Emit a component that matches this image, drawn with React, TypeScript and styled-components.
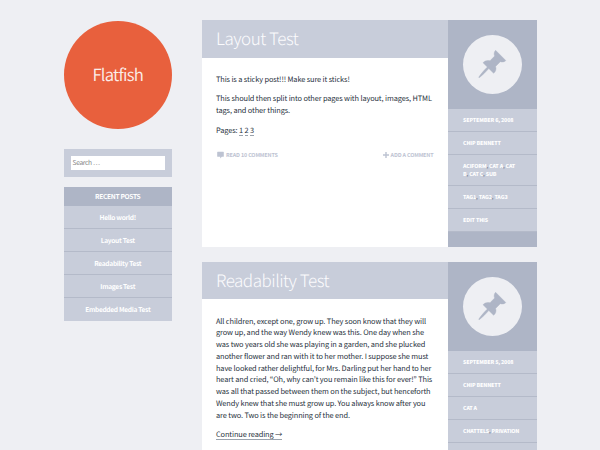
import React from "react";
import styled, { createGlobalStyle } from "styled-components";

const Global = createGlobalStyle`
  * { box-sizing: border-box; }
  body { margin: 0; background: #eeeff3; overflow: hidden; }
  #root {
    font-family: "Noto Sans CJK KR", "Noto Sans", sans-serif;
    color: #1f313c;
    text-rendering: geometricPrecision;
  }
`;

const Page = styled.div`
  display: flex;
  align-items: flex-start;
  gap: 29.5px;
  height: 450px;
  padding: 20px 0 0 63.5px;
  overflow: hidden;
`;

const Sidebar = styled.aside`
  width: 108.5px;
  flex: none;
`;

const Logo = styled.h1`
  width: 108.5px;
  height: 108.5px;
  margin: 0.5px 0 20px;
  padding-bottom: 2px;
  border-radius: 50%;
  background: #e8603d;
  color: #fbeeea;
  display: flex;
  align-items: center;
  justify-content: center;
  font-size: 16.8px;
  font-weight: 350;
  letter-spacing: -0.8px;
`;

const Search = styled.div`
  height: 28px;
  padding: 7px;
  background: #c8cdda;
`;

const Field = styled.div`
  height: 14px;
  padding-left: 2px;
  background: #fff;
  color: #858585;
  font-size: 6.6px;
  letter-spacing: -0.3px;
  line-height: 13px;
`;

const Recent = styled.nav`
  margin-top: 10px;
  background: #c8cdda;
  color: #fff;
  text-align: center;
  font-size: 6.6px;
  font-weight: 700;
  letter-spacing: -0.3px;
`;

const RecentHead = styled.div`
  height: 19px;
  line-height: 19px;
  background: #aeb5c6;
`;

const RecentItem = styled.div`
  height: 23px;
  line-height: 23px;
  border-bottom: 1px solid #b4bac9;
  &:last-child { border: 0; }
`;

const Main = styled.main`
  width: 335.5px;
  flex: none;
  display: flex;
  flex-direction: column;
  gap: 15px;
`;

const Post = styled.article`
  display: flex;
  flex: none;
  height: 227px;
  background: #fff;
`;

const Content = styled.div`
  flex: 1;
  min-width: 0;
`;

const Title = styled.h2<{ $h: number }>`
  margin: 0;
  height: ${(p) => p.$h}px;
  padding-left: 14.5px;
  background: #c8cdda;
  color: #fbfbfd;
  font-size: 17px;
  font-weight: 300;
  letter-spacing: -0.48px;
  line-height: 35.5px;
  white-space: nowrap;
`;

const Body = styled.div<{ $top: number }>`
  padding: ${(p) => p.$top}px 14.5px 0;
  font-size: 7.4px;
  letter-spacing: -0.12px;
  line-height: 11.75px;
`;

const Para = styled.p`
  margin: 0 0 8px;
  white-space: pre;
`;

const Link = styled.a`
  display: inline-block;
  line-height: 9px;
  border-bottom: 1px solid #9aa3ad;
`;

const Foot = styled.footer`
  display: flex;
  justify-content: space-between;
  padding: 4px 0 0 1px;
  color: #bdc3d2;
  font-size: 5.4px;
  font-weight: 700;
  line-height: 12px;
`;

const Action = styled.span`
  display: flex;
  align-items: center;
  gap: 2px;
`;

const Meta = styled.aside`
  width: 89px;
  flex: none;
  background: #aeb5c6;
  color: #fff;
  font-size: 5.3px;
  font-weight: 900;
  letter-spacing: -0.15px;
`;

const Badge = styled.div`
  width: 59px;
  height: 59px;
  margin: 15px 0 15px 15px;
  border-radius: 50%;
  background: #eeeff3;
`;

const MetaRow = styled.div<{ $h?: number }>`
  height: ${(p) => p.$h ?? 23}px;
  padding: 8px 0 0 15px;
  background: #c8cdda;
  border-bottom: 1px solid #b4bac9;
`;

const MetaLine = styled.div`
  display: flex;
  height: 7.7px;
  line-height: 7.7px;
  white-space: pre;
`;

const Comma = styled.span`
  width: 2.6px;
  color: #7f8899;
  font-weight: 700;
  letter-spacing: 0;
`;

const Pin = () => (
  <Badge>
    <svg width="59" height="59" viewBox="0 0 59 59" fill="#aeb5c6">
      <path d="M32.6 15.3 42.8 25.5C41.5 27 39.3 27.3 37.3 26.7L32.6 31.4C33.6 34 32.8 36.5 30.6 38.3L25.8 33.6C22.7 37 19.6 40.2 16.2 42.8L15.7 42.2C18.1 38.8 20.9 35.3 24.3 32.1L20 27.8C21.8 25.7 24.4 25 27 25.8L31.6 21.1C30.8 19.1 31 16.8 32.6 15.3Z" stroke="#aeb5c6" strokeWidth="0.4" />
    </svg>
  </Badge>
);

const List = ({ items }: { items: string[] }) => (
  <MetaLine>
    {items.map((item, i) => (
      <React.Fragment key={item}>
        <span>{item}</span>
        {i < items.length - 1 && <Comma>,</Comma>}
      </React.Fragment>
    ))}
  </MetaLine>
);

const recent = ["Hello world!", "Layout Test", "Readability Test", "Images Test", "Embedded Media Test"];

const story = `All children, except one, grow up. They soon know that they will
grow up, and the way Wendy knew was this. One day when she
was two years old she was playing in a garden, and she plucked
another flower and ran with it to her mother. I suppose she must
have looked rather delightful, for Mrs. Darling put her hand to her
heart and cried, “Oh, why can’t you remain like this for ever!” This
was all that passed between them on the subject, but henceforth
Wendy knew that she must grow up. You always know after you
are two. Two is the beginning of the end.`;

export default function App() {
  return (
    <>
      <Global />
      <Page>
        <Sidebar>
          <Logo>Flatfish</Logo>
          <Search>
            <Field>Search …</Field>
          </Search>
          <Recent>
            <RecentHead>RECENT POSTS</RecentHead>
            {recent.map((r) => (
              <RecentItem key={r}>{r}</RecentItem>
            ))}
          </Recent>
        </Sidebar>
        <Main>
          <Post>
            <Content>
              <Title $h={38}>Layout Test</Title>
              <Body $top={15.6}>
                <Para>This is a sticky post!!! Make sure it sticks!</Para>
                <Para>{"This should then split into other pages with layout, images, HTML\ntags, and other things."}</Para>
                <Para>
                  Pages: <Link>1</Link> <Link>2</Link> <Link>3</Link>
                </Para>
                <Foot>
                  <Action>
                    <svg width="7" height="8" viewBox="0 0 7 8" fill="#bdc3d2">
                      <path d="M.7.8h5.6q.5 0 .5.5v4q0 .5-.5.5H4.8L3.2 7.6V5.8H.7q-.5 0-.5-.5v-4q0-.5.5-.5Z" />
                    </svg>
                    READ 10 COMMENTS
                  </Action>
                  <Action>
                    <svg width="6" height="6" viewBox="0 0 6 6" fill="#bdc3d2">
                      <path d="M2.3 0h1.4v2.3H6v1.4H3.7V6H2.3V3.7H0V2.3h2.3Z" />
                    </svg>
                    ADD A COMMENT
                  </Action>
                </Foot>
              </Body>
            </Content>
            <Meta>
              <Pin />
              <MetaRow>
                <List items={["SEPTEMBER 6, 2008"]} />
              </MetaRow>
              <MetaRow>
                <List items={["CHIP BENNETT"]} />
              </MetaRow>
              <MetaRow $h={31}>
                <List items={["ACIFORM", "CAT A", "CAT"]} />
                <List items={["B", "CAT C", "SUB"]} />
              </MetaRow>
              <MetaRow>
                <List items={["TAG1", "TAG2", "TAG3"]} />
              </MetaRow>
              <MetaRow>
                <List items={["EDIT THIS"]} />
              </MetaRow>
            </Meta>
          </Post>
          <Post>
            <Content>
              <Title $h={37}>Readability Test</Title>
              <Body $top={16.7}>
                <Para>{story}</Para>
                <Para>
                  <Link>Continue reading →</Link>
                </Para>
              </Body>
            </Content>
            <Meta>
              <Pin />
              <MetaRow>
                <List items={["SEPTEMBER 5, 2008"]} />
              </MetaRow>
              <MetaRow>
                <List items={["CHIP BENNETT"]} />
              </MetaRow>
              <MetaRow>
                <List items={["CAT A"]} />
              </MetaRow>
              <MetaRow>
                <List items={["CHATTELS", "PRIVATION"]} />
              </MetaRow>
              <MetaRow />
            </Meta>
          </Post>
        </Main>
      </Page>
    </>
  );
}
